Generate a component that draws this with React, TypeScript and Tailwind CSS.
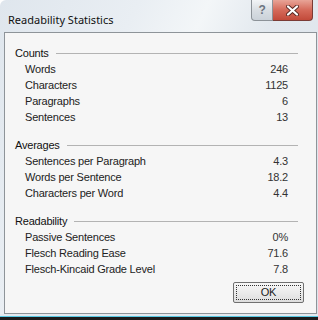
const counts = [
  ["Words", "246"],
  ["Characters", "1125"],
  ["Paragraphs", "6"],
  ["Sentences", "13"],
];

const averages = [
  ["Sentences per Paragraph", "4.3"],
  ["Words per Sentence", "18.2"],
  ["Characters per Word", "4.4"],
];

const readability = [
  ["Passive Sentences", "0%"],
  ["Flesch Reading Ease", "71.6"],
  ["Flesch-Kincaid Grade Level", "7.8"],
];

function Section({ title, rows, first }: { title: string; rows: string[][]; first?: boolean }) {
  return (
    <div className={first ? "flex flex-col" : "mt-[13px] flex flex-col"}>
      <div className="flex h-[15px] items-center pl-[10px] pr-[18px]">
        <span className="text-[#111]">{title}</span>
        <div className="ml-[7px] h-px flex-1 bg-[#b3b3b3]" />
      </div>
      {rows.map(([label, value]) => (
        <div key={label} className="flex h-4 items-center pl-[20px] pr-[28px]">
          <span className="text-[#222]">{label}</span>
          <span className="ml-auto text-[#333]">{value}</span>
        </div>
      ))}
    </div>
  );
}

export default function App() {
  return (
    <div className="flex h-[320px] w-[318px] flex-col overflow-hidden rounded-tl-[6px] bg-[linear-gradient(115deg,#dfe6ed_0%,#e9eef3_30%,#f3f6f8_45%,#e2e8ee_60%,#dde4eb_100%)] font-['Liberation_Sans',Arial,sans-serif] text-[11px] tracking-[-0.2px]">
      {/* title bar */}
      <div className="flex h-[32px] shrink-0 items-start">
        <span className="mt-[11px] pl-[8px] font-['Noto_Sans',sans-serif] text-[11px] leading-[17px] tracking-normal text-[#111]">
          Readability Statistics
        </span>
        <div className="ml-auto mr-[5px] flex">
          <div className="flex h-[21px] w-[22px] items-center justify-center rounded-bl-[4px] border border-t-0 border-[#8c9298] bg-[linear-gradient(#f2f4f6,#d9dee3_50%,#cbd2d9)] text-[12px] font-bold text-[#6c7580]">
            ?
          </div>
          <div className="flex h-[21px] w-[40px] items-center justify-center rounded-br-[4px] border border-l-0 border-t-0 border-[#7a3b35] bg-[linear-gradient(#e8a497,#d56a5a_50%,#c24a3a)]">
            <svg width="13" height="11" viewBox="0 0 13 11">
              <path d="M2 1.5 L11 9.5 M11 1.5 L2 9.5" stroke="#5a2a24" strokeWidth="4" strokeLinecap="round" />
              <path d="M2 1.5 L11 9.5 M11 1.5 L2 9.5" stroke="#ffffff" strokeWidth="2.2" strokeLinecap="round" />
            </svg>
          </div>
        </div>
      </div>

      {/* client area */}
      <div className="ml-[4px] mr-[1px] flex h-[282px] shrink-0 flex-col border border-[#8e9499] bg-[#f6f6f6] pt-[13px]">
        <Section title="Counts" rows={counts} first />
        <Section title="Averages" rows={averages} />
        <Section title="Readability" rows={readability} />
        <div className="mr-[12px] mt-[5px] flex justify-end">
          <button className="flex h-[21px] w-[71px] items-center justify-center rounded-[2px] border border-[#707070] bg-[linear-gradient(#f7f7f7,#ebebeb_50%,#dddddd)] p-[2px]">
            <span className="flex h-full w-full items-center justify-center border border-dotted border-[#333] text-[11px] text-[#222]">
              OK
            </span>
          </button>
        </div>
      </div>

      {/* bottom edge */}
      <div className="h-[2px] shrink-0 bg-[#e4eaef]" />
      <div className="h-px shrink-0 bg-[#57c9e4]" />
      <div className="flex-1 bg-[#1c1c1c]" />
    </div>
  );
}
